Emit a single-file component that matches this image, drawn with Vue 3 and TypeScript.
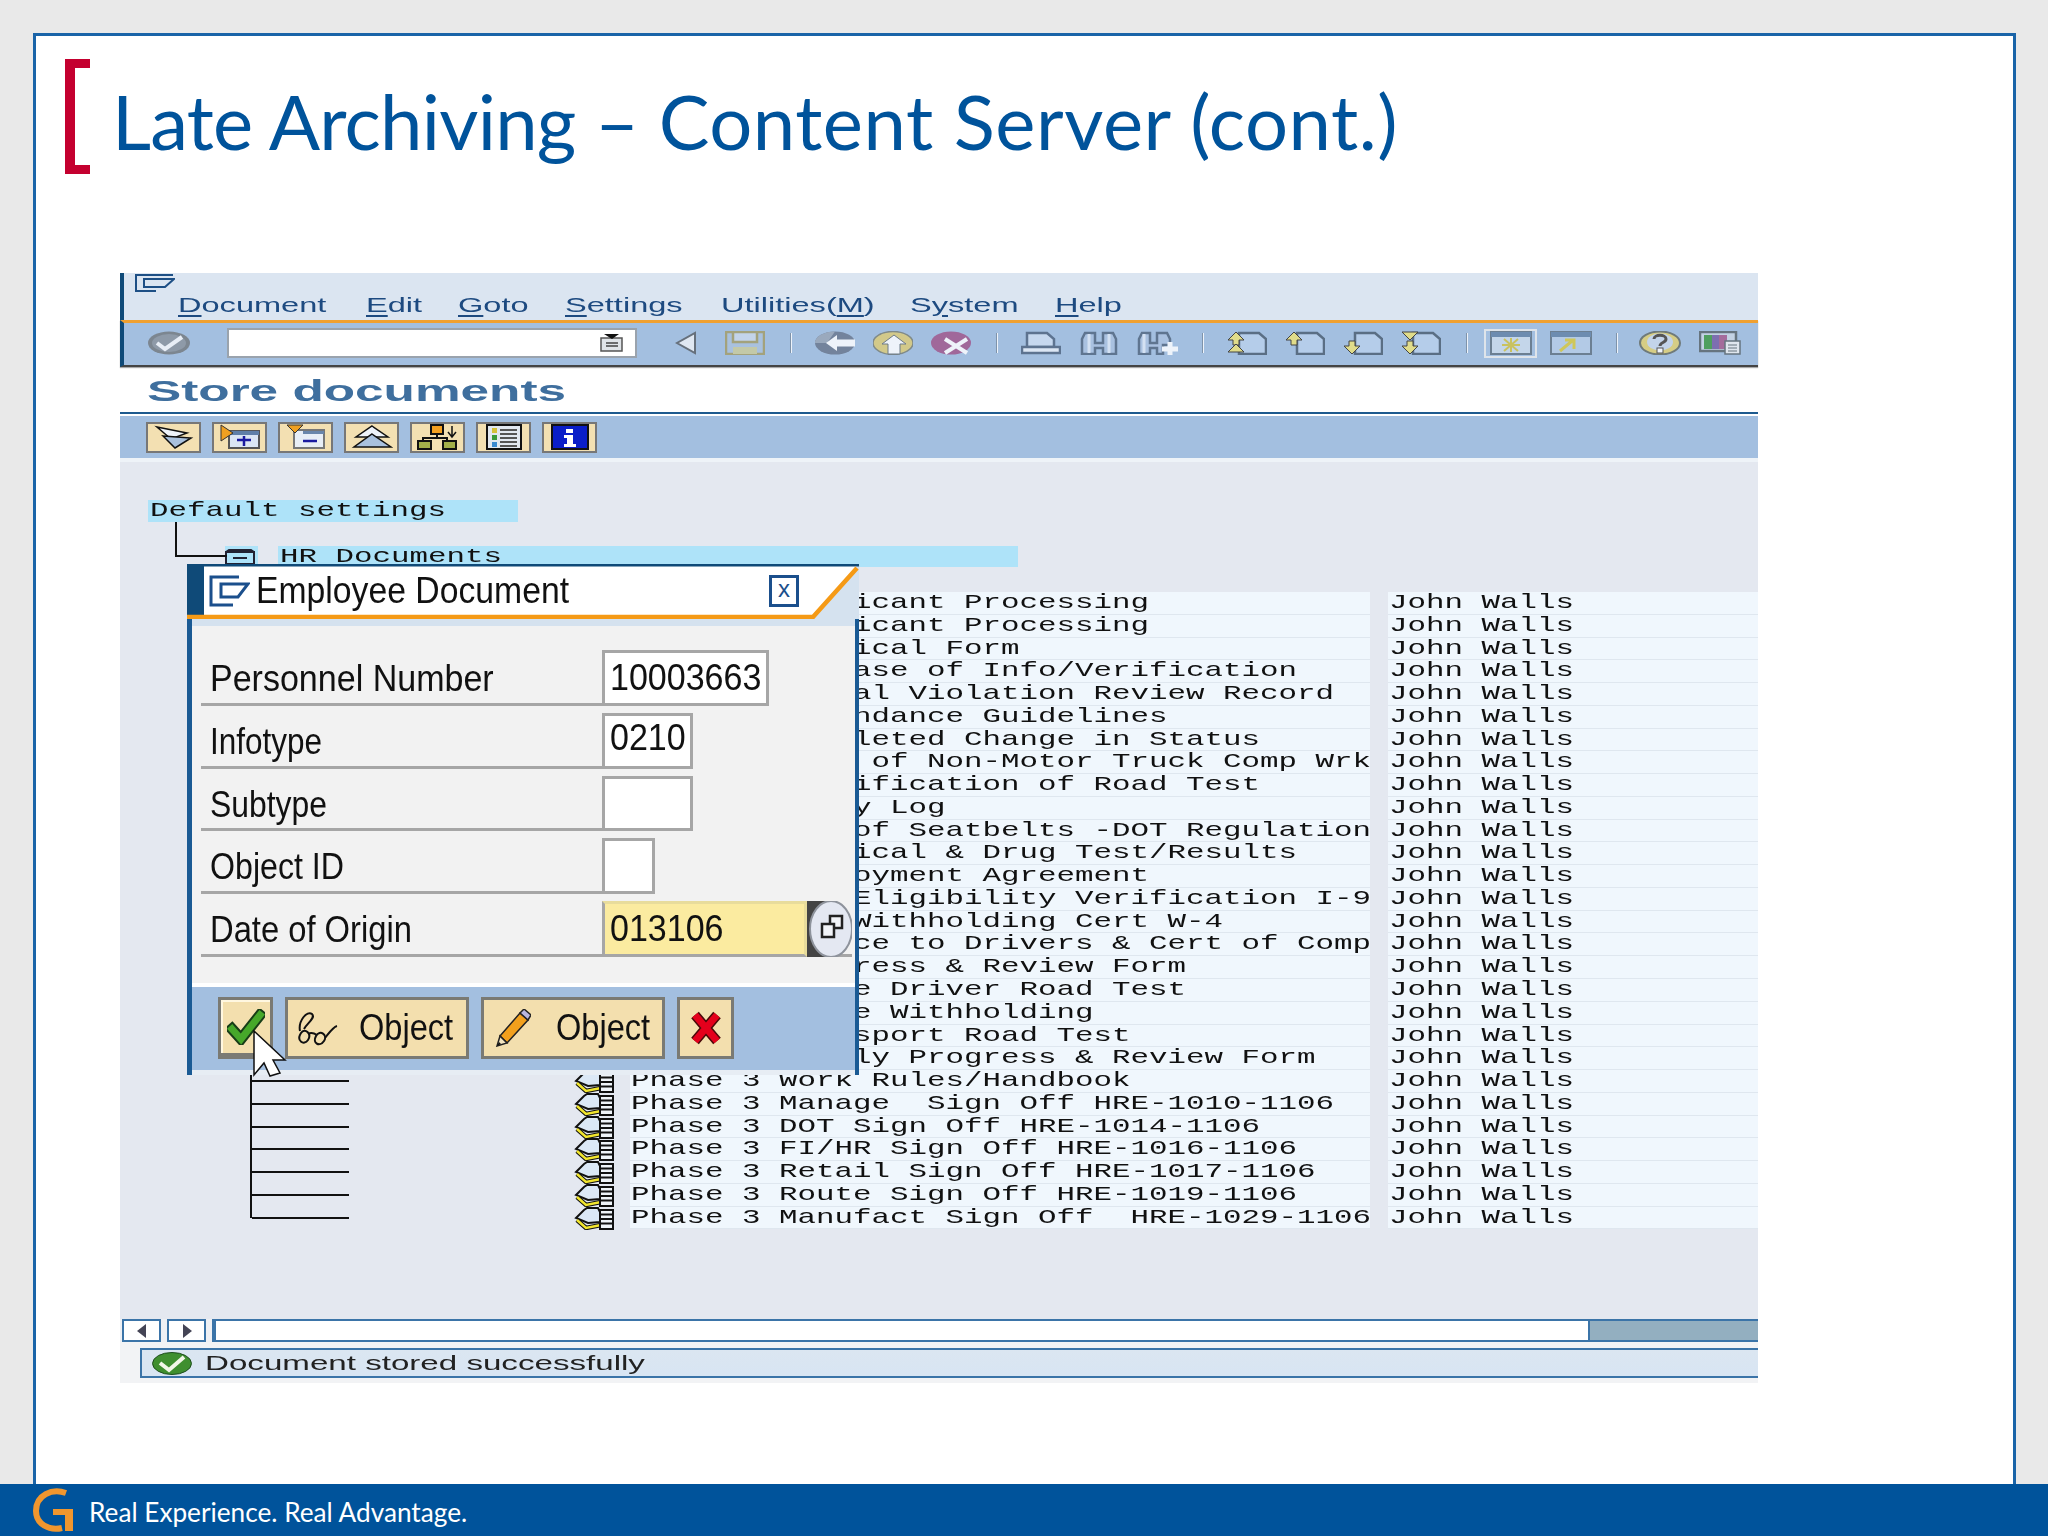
<script setup lang="ts">
interface MenuItem { pre: string; hot: string; post: string; w: number }
interface Field { label: string; value: string; w: number; sx: number; raised?: boolean; date?: boolean }

const menu: MenuItem[] = [
  { pre: '', hot: 'D', post: 'ocument', w: 188 },
  { pre: '', hot: 'E', post: 'dit', w: 92 },
  { pre: '', hot: 'G', post: 'oto', w: 107 },
  { pre: '', hot: 'S', post: 'ettings', w: 156 },
  { pre: 'Utilities(', hot: 'M', post: ')', w: 189 },
  { pre: 'S', hot: 'y', post: 'stem', w: 145 },
  { pre: '', hot: 'H', post: 'elp', w: 80 },
]

const rows: string[] = [
  'Phase 1 Applicant Processing',
  'Phase 1 Applicant Processing',
  'Phase 1 Physical Form',
  'Phase 1 Release of Info/Verification',
  'Phase 1 Annual Violation Review Record',
  'Phase 1 Attendance Guidelines',
  'Phase 2 Completed Change in Status',
  'Phase 2 Cert of Non-Motor Truck Comp Wrk',
  'Phase 2 Certification of Road Test',
  'Phase 2 Daily Log',
  'Phase 2 Use of Seatbelts -DOT Regulation',
  'Phase 2 Physical & Drug Test/Results',
  'Phase 2 Employment Agreement',
  'Phase 2 Emp Eligibility Verification I-9',
  'Phase 2 Fed Withholding Cert W-4',
  'Phase 2 Notice to Drivers & Cert of Comp',
  'Phase 2 Progress & Review Form',
  'Phase 3 Route Driver Road Test',
  'Phase 3 State Withholding',
  'Phase 3 Transport Road Test',
  'Phase 3 Weekly Progress & Review Form',
  'Phase 3 Work Rules/Handbook',
  'Phase 3 Manage  Sign Off HRE-1010-1106',
  'Phase 3 DOT Sign Off HRE-1014-1106',
  'Phase 3 FI/HR Sign Off HRE-1016-1106',
  'Phase 3 Retail Sign Off HRE-1017-1106',
  'Phase 3 Route Sign Off HRE-1019-1106',
  'Phase 3 Manufact Sign Off  HRE-1029-1106',
]

const fields: Field[] = [
  { label: 'Personnel Number', value: '10003663', w: 167, sx: 0.945 },
  { label: 'Infotype', value: '0210', w: 91, sx: 0.874, raised: true },
  { label: 'Subtype', value: '', w: 91, sx: 0.885 },
  { label: 'Object ID', value: '', w: 53, sx: 0.893 },
  { label: 'Date of Origin', value: '013106', w: 205, sx: 0.909, date: true },
]
</script>

<template>
  <div class="slide">
    <div class="frame">
      <div class="head">
        <div class="bracket"></div>
        <h1 class="title"><span class="t-a">Late Archiving</span> – <span class="t-b">Content Server (cont.)</span></h1>
      </div>

      <div class="sap">
        <div class="menubar">
          <svg class="sysicon" width="40" height="18" viewBox="0 0 40 18" fill="none" stroke="#1d4f85" stroke-width="2">
            <path d="M38 1H1V17H21" /><path d="M9 13V5H39L30 13Z" />
          </svg>
          <div class="menu">
            <div v-for="m in menu" :key="m.hot + m.post" class="menu-item" :style="{ width: m.w + 'px' }">
              <span class="menu-text">{{ m.pre }}<span class="hot">{{ m.hot }}</span>{{ m.post }}</span>
            </div>
          </div>
        </div>

        <div class="stdbar">
          <svg class="ic-check" width="43" height="24" viewBox="0 0 43 24">
            <ellipse cx="21" cy="12" rx="21" ry="11.5" fill="#7c8690" /><ellipse cx="21" cy="12" rx="17" ry="9" fill="#8e9aa8" />
            <path d="M9 12L17 18L34 6" fill="none" stroke="#e8eef6" stroke-width="4" />
          </svg>
          <div class="cmd">
            <svg width="26" height="18" viewBox="0 0 26 18">
              <rect x="2" y="4" width="21" height="13" fill="#e0e4e8" stroke="#555" stroke-width="1.5" />
              <path d="M5 0H20L13 5Z" fill="#111" /><path d="M7 9H19M7 12H19" stroke="#444" stroke-width="1.5" />
            </svg>
          </div>
          <svg class="ic-tri" width="22" height="24" viewBox="0 0 22 24">
            <path d="M20 2V22L2 12Z" fill="#dfe7f2" stroke="#66707c" stroke-width="2" />
          </svg>
          <svg class="ic-save" width="40" height="24" viewBox="0 0 40 24">
            <rect x="1" y="1" width="38" height="22" fill="#a9c1de" stroke="#a3a27c" stroke-width="2.5" />
            <rect x="8" y="1" width="24" height="10" fill="#c3d4ea" stroke="#a3a27c" stroke-width="2.5" />
            <rect x="8" y="16" width="24" height="7" fill="#c3c9a8" />
          </svg>
          <i class="sep"></i>
          <div class="tb-group">
            <svg width="40" height="24" viewBox="0 0 40 24">
              <ellipse cx="20" cy="12" rx="20" ry="11.5" fill="#73839c" />
              <path d="M0 12A20 11.5 0 0 1 20 .5L12 12Z" fill="#9aa9bd" />
              <path d="M11 12L22 4V8.5H40V15.5H22V20Z" fill="#eef3fa" />
            </svg>
            <svg width="40" height="24" viewBox="0 0 40 24">
              <ellipse cx="20" cy="12" rx="20" ry="11.5" fill="#d2c98a" stroke="#7f8a8a" stroke-width="1.5" />
              <path d="M21 4L33 13H27V23H15V13H9Z" fill="#eef3fa" stroke="#6d7a88" />
            </svg>
            <svg width="40" height="24" viewBox="0 0 40 24">
              <ellipse cx="20" cy="12" rx="20" ry="11.5" fill="#a0689a" />
              <path d="M14 8L36 22M36 8L14 22" stroke="#eef3fa" stroke-width="4" />
            </svg>
          </div>
          <i class="sep"></i>
          <div class="tb-group">
            <svg width="40" height="24" viewBox="0 0 40 24" fill="#c6d8ef" stroke="#5d7390" stroke-width="2.5">
              <path d="M6 16V2H26L33 8V16Z" /><rect x="1" y="16" width="38" height="6" fill="#dbe6f4" />
            </svg>
            <svg width="40" height="24" viewBox="0 0 40 24" fill="#a9c1e0" stroke="#5f7590" stroke-width="2.5">
              <path d="M3 8L6 2H16V12H24V2H34L37 8V23H24V17H16V23H3Z" /><path d="M10 3V22M30 3V22" stroke="#d4e1f2" stroke-width="3" />
            </svg>
            <svg class="find-next" width="42" height="24" viewBox="0 0 42 24" fill="#a9c1e0" stroke="#5f7590" stroke-width="2.5">
              <path d="M2 8L5 2H13V12H20V2H30L33 8V14H26V23H20V17H13V23H2Z" />
              <path d="M7 3V22" stroke="#d4e1f2" stroke-width="3" />
              <path d="M25 18H41M33 11V24" stroke="#eef3fa" stroke-width="5" />
            </svg>
          </div>
          <i class="sep"></i>
          <div class="tb-group">
            <svg v-for="n in 4" :key="n" width="40" height="24" viewBox="0 0 40 24">
              <path d="M12 2H32L39 8V23H12Z" fill="#b5cdea" stroke="#5a6e84" stroke-width="2.5" />
              <path v-if="n === 1 || n === 2" d="M9 1L17 9H12V14H6V9H1Z" fill="#e0dc8a" stroke="#444" />
              <path v-if="n === 3 || n === 4" d="M9 23L17 15H12V10H6V15H1Z" fill="#e0dc8a" stroke="#444" />
              <path v-if="n === 1" d="M9 13L17 21H1Z" fill="#e0dc8a" stroke="#444" />
              <path v-if="n === 4" d="M9 9L17 1H1Z" fill="#e0dc8a" stroke="#444" />
            </svg>
          </div>
          <i class="sep"></i>
          <div class="tb-group">
            <div class="pressed">
              <svg width="42" height="24" viewBox="0 0 42 24">
                <rect x="1" y="1" width="40" height="22" fill="#c4d6ea" stroke="#6c7f92" stroke-width="2" />
                <rect x="1" y="1" width="40" height="5" fill="#6d8cb0" />
                <path d="M21 7V21M12 14H30M14 8L28 20M28 8L14 20" stroke="#c9c25f" stroke-width="2" />
              </svg>
            </div>
            <svg class="shortcut" width="42" height="24" viewBox="0 0 42 24">
              <rect x="1" y="1" width="40" height="22" fill="#b3cae6" stroke="#6c7f92" stroke-width="2" />
              <rect x="1" y="1" width="40" height="5" fill="#6d8cb0" />
              <path d="M10 20L22 10M15 9H24V18" fill="none" stroke="#cfc75a" stroke-width="3" />
            </svg>
          </div>
          <i class="sep"></i>
          <div class="tb-group tb-last">
            <svg width="42" height="24" viewBox="0 0 42 24">
              <ellipse cx="21" cy="12" rx="20" ry="11.5" fill="#d6cd85" stroke="#6f7a7a" stroke-width="2" />
              <ellipse cx="21" cy="11" rx="13" ry="8.5" fill="#c3d4ea" />
              <path d="M15 8C15 3 27 3 27 8C27 12 21 11 21 15" fill="none" stroke="#555" stroke-width="3" /><rect x="18" y="17" width="6" height="5" fill="#eef3fa" stroke="#555" />
            </svg>
            <svg width="42" height="24" viewBox="0 0 42 24">
              <rect x="1" y="1" width="36" height="19" fill="#c3d2e4" stroke="#66747f" stroke-width="2.5" />
              <rect x="5" y="4" width="8" height="14" fill="#4f9f5f" /><rect x="13" y="4" width="7" height="14" fill="#7d6fb0" /><rect x="20" y="4" width="8" height="14" fill="#a46c9c" />
              <rect x="26" y="10" width="15" height="13" fill="#dfe6ee" stroke="#66747f" stroke-width="1.5" />
              <path d="M29 14H38M29 17H38M29 20H38" stroke="#66747f" />
            </svg>
          </div>
        </div>

        <div class="screen-title"><span class="screen-title-text">Store documents</span></div>

        <div class="appbar">
          <div class="tbtn">
            <svg width="42" height="24" viewBox="0 0 42 24" stroke="#111" stroke-width="1.5">
              <path d="M4 2L34 8L18 14Z" fill="#eef3fa" /><path d="M10 11L38 13L22 23Z" fill="#a9c1de" />
            </svg>
          </div>
          <div class="tbtn">
            <svg width="42" height="26" viewBox="0 0 42 26">
              <rect x="10" y="7" width="30" height="17" fill="#dbe6f4" stroke="#555" stroke-width="2" />
              <rect x="10" y="7" width="30" height="4" fill="#5f7fa8" />
              <path d="M2 1L14 9L2 17Z" fill="#f0a020" stroke="#333" />
              <path d="M18 16H32M25 12V22" stroke="#1a1aa0" stroke-width="2.5" />
            </svg>
          </div>
          <div class="tbtn">
            <svg width="42" height="26" viewBox="0 0 42 26">
              <rect x="9" y="6" width="30" height="18" fill="#e8eef6" stroke="#777" stroke-width="2" />
              <rect x="18" y="7" width="21" height="3" fill="#6a86ab" />
              <path d="M2 1H18L10 9Z" fill="#f0a020" stroke="#333" />
              <path d="M18 17H32" stroke="#1a1aa0" stroke-width="2.5" />
            </svg>
          </div>
          <div class="tbtn">
            <svg width="42" height="24" viewBox="0 0 42 24" stroke="#111" stroke-width="1.5">
              <path d="M21 1L37 12H5Z" fill="#eef3fa" /><path d="M21 9L40 22H3Z" fill="#a9c1de" />
            </svg>
          </div>
          <div class="tbtn">
            <svg width="42" height="26" viewBox="0 0 42 26">
              <rect x="14" y="1" width="12" height="9" fill="#f4a020" stroke="#111" stroke-width="2" />
              <path d="M20 10V14M6 18V14H30V18" fill="none" stroke="#111" stroke-width="2" />
              <rect x="1" y="17" width="13" height="8" fill="#a3b04a" stroke="#111" stroke-width="2" />
              <rect x="26" y="17" width="13" height="8" fill="#a3b04a" stroke="#111" stroke-width="2" />
              <path d="M35 2V12M31 8L35 13L39 8" fill="none" stroke="#111" stroke-width="1.5" />
            </svg>
          </div>
          <div class="tbtn">
            <svg width="36" height="26" viewBox="0 0 36 26">
              <rect x="1" y="1" width="34" height="24" fill="#e2e8f0" stroke="#111" stroke-width="2" />
              <rect x="6" y="4" width="5" height="5" fill="#d4c13a" /><rect x="6" y="11" width="5" height="5" fill="#3a9a3a" /><rect x="6" y="18" width="5" height="5" fill="#3a8ad0" />
              <path d="M14 6H31M14 10H31M14 14H31M14 18H31M14 22H31" stroke="#555" stroke-width="2" />
            </svg>
          </div>
          <div class="tbtn">
            <svg width="38" height="26" viewBox="0 0 38 26">
              <rect x="1" y="1" width="36" height="24" fill="#0a1ec8" stroke="#111" stroke-width="2" />
              <path d="M15 5H22V9H15ZM13 11H22V20H25V23H13V20H16V14H13Z" fill="#fff" />
            </svg>
          </div>
        </div>

        <div class="content">
          <div class="default-row"><span class="mono">Default settings</span></div>
          <div class="hr-row">
            <div class="elbow"></div>
            <div class="folder">
              <svg width="30" height="16" viewBox="0 0 30 16" fill="none" stroke="#223" stroke-width="2">
                <rect x="1" y="3" width="28" height="12" /><path d="M1 3L4 1H26L29 3M8 9H22" />
              </svg>
            </div>
            <div class="hr-text"><span class="mono">HR Documents</span></div>
          </div>

          <div class="rows">
            <div v-for="(r, i) in rows" :key="i" class="row">
              <div class="tree-cell">
                <div v-if="i >= 21" class="tree" :class="{ last: i === rows.length - 1 }"><div class="tree-h"></div></div>
              </div>
              <svg class="row-ic" width="40" height="23" viewBox="0 0 40 23">
                <path d="M2 11L10 3L13 1H24L27 7L26 15L14 16Z" fill="#dbe8f6" stroke="#111" stroke-width="2" />
                <path d="M3 13L12 21L27 18" fill="none" stroke="#111" stroke-width="4.5" />
                <path d="M3 13L12 21L27 18" fill="none" stroke="#f2e62e" stroke-width="2.5" />
                <rect x="26" y="3" width="13" height="19" fill="#eef3f8" stroke="#111" stroke-width="2" />
                <path d="M26 7.5H39M26 12H39M26 16.5H39" stroke="#111" stroke-width="2" />
              </svg>
              <div class="cell"><span class="mono">{{ r }}</span></div>
              <div class="cell-gap"></div>
              <div class="cell"><span class="mono">John Walls</span></div>
            </div>
          </div>
        </div>

        <div class="scroll">
          <div class="sbtn"><svg width="10" height="14" viewBox="0 0 10 14"><path d="M9 0V14L0 7Z" fill="#445" /></svg></div>
          <div class="sbtn"><svg width="10" height="14" viewBox="0 0 10 14"><path d="M1 0V14L10 7Z" fill="#445" /></svg></div>
          <div class="track"><div class="thumb"></div></div>
        </div>

        <div class="status-wrap">
          <div class="status">
            <svg width="40" height="23" viewBox="0 0 40 23">
              <ellipse cx="20" cy="11.5" rx="19.5" ry="11" fill="#3f8f2f" stroke="#1f4f1f" />
              <path d="M8 11L17 18L32 5" fill="none" stroke="#f2f6e8" stroke-width="4" />
            </svg>
            <span class="status-text">Document stored successfully</span>
          </div>
        </div>

        <div class="dialog">
          <div class="dlg-head">
            <svg class="dlg-shape" width="672" height="55" viewBox="0 0 672 55">
              <rect width="672" height="55" fill="#d5e2ef" />
              <path d="M17 2H670L626 51H17Z" fill="#fff" />
              <rect width="17" height="51" fill="#0f4a78" />
              <rect width="672" height="2.5" fill="#0f4a78" />
              <path d="M0 53H626L670 4" fill="none" stroke="#f59a16" stroke-width="4.5" />
            </svg>
            <svg class="dlg-icon" width="41" height="32" viewBox="0 0 41 32" fill="none" stroke="#1b4f8c" stroke-width="3">
              <path d="M30 2H2V30H24" /><path d="M12 22V9H39L29 22Z" />
            </svg>
            <span class="dlg-title">Employee Document</span>
            <div class="dlg-close">x</div>
          </div>
          <div class="dlg-strip"></div>
          <div class="dlg-body">
            <div v-for="f in fields" :key="f.label" class="field" :style="{ width: 401 + f.w + (f.date ? 45 : 0) + 'px' }">
              <div class="f-label"><span class="f-label-text" :style="{ transform: 'scaleX(' + f.sx + ')' }">{{ f.label }}</span></div>
              <div class="f-input" :class="{ yellow: f.date }" :style="{ width: f.w + 'px' }">
                <span class="f-value" :class="{ raised: f.raised }">{{ f.value }}</span>
              </div>
              <svg v-if="f.date" class="lookup" width="45" height="56" viewBox="0 0 45 56">
                <rect width="30" height="56" fill="#444" />
                <ellipse cx="24" cy="28" rx="21" ry="28" fill="#e4e8f2" stroke="#8e939c" stroke-width="2" />
                <rect x="23" y="15" width="12" height="12" fill="#f2f4f8" stroke="#222" stroke-width="2.5" />
                <rect x="15" y="23" width="12" height="13" fill="#f2f4f8" stroke="#222" stroke-width="2.5" />
              </svg>
            </div>
          </div>
          <div class="dlg-bar">
            <div class="btn btn-ok">
              <svg width="38" height="36" viewBox="0 0 38 36" fill="none" stroke-linecap="square">
                <path d="M5 20L14 30L33 6" stroke="#173d17" stroke-width="11" /><path d="M5 20L14 30L33 6" stroke="#46a82a" stroke-width="7" />
              </svg>
            </div>
            <div class="btn btn-show">
              <svg width="44" height="38" viewBox="0 0 44 38" fill="none" stroke="#111" stroke-width="2">
                <path d="M6 24C1 32 9 37 13 31C17 25 10 18 6 24ZM21 27C17 35 25 38 29 32C33 26 25 20 21 27ZM13 25C16 23 19 24 22 26" />
                <path d="M5 22C3 12 12 1 17 5C21 9 12 14 9 20M30 29C34 24 38 18 42 17" />
              </svg>
              <span class="btn-text">Object</span>
            </div>
            <div class="btn btn-edit">
              <svg width="36" height="38" viewBox="0 0 36 38">
                <path d="M5 27L25 4L33 11L12 34Z" fill="#f2a01c" stroke="#222" stroke-width="1.5" />
                <path d="M25 4L29 0L36 6L33 11Z" fill="#b9b6de" stroke="#222" stroke-width="1.5" />
                <path d="M5 27L12 34L2 37Z" fill="#f5e6c0" stroke="#222" stroke-width="1.5" />
                <path d="M4 33L6 35L2 37Z" fill="#111" />
              </svg>
              <span class="btn-text">Object</span>
            </div>
            <div class="btn btn-x">
              <svg width="32" height="34" viewBox="0 0 32 34" fill="none">
                <path d="M5 4L27 30M27 4L5 30" stroke="#4a0a0a" stroke-width="10" /><path d="M5 4L27 30M27 4L5 30" stroke="#e4001c" stroke-width="7" />
              </svg>
            </div>
          </div>
          <div class="dlg-end"></div>
        </div>

        <svg class="cursor" width="34" height="48" viewBox="0 0 34 48">
          <path d="M1 1L32 30H20L27 43L17 46L11 33L1 45Z" fill="#fff" stroke="#111" stroke-width="1.5" />
        </svg>
      </div>
    </div>

    <footer class="foot">
      <svg class="logo" width="42" height="44" viewBox="0 0 42 44">
        <path d="M34 5C20 0 4 7 4 23C4 36 17 43 30 40" fill="none" stroke="#f0962e" stroke-width="6" />
        <path d="M21 21H41V43H33V27H21Z" fill="#f0962e" />
      </svg>
      <span class="tagline">Real Experience. Real Advantage.</span>
    </footer>
  </div>
</template>

<style>
body { margin: 0; }
</style>

<style scoped>
.slide { width: 2048px; height: 1536px; background: #e9e9e9; display: flex; flex-direction: column; overflow: hidden; }
.frame { margin: 33px 32px 0 33px; height: 1451px; box-sizing: border-box; border: 3px solid #1a64a8; border-bottom: 0; background: #fff; }
.head { height: 237px; box-sizing: border-box; padding: 23px 0 0 29px; display: flex; }
.bracket { width: 25px; height: 115px; box-sizing: border-box; border: solid #c4002f; border-width: 9px 0 9px 10px; }
.title { margin: 17px 0 0 22px; font: 400 76px/90px Lato, sans-serif; color: #00539b; white-space: nowrap; }
.t-a { letter-spacing: -0.75px; }
.t-b { letter-spacing: 0.55px; }

.sap { position: relative; margin-left: 84px; width: 1638px; height: 1110px; display: flex; flex-direction: column; font-family: "Liberation Sans", sans-serif; filter: blur(0.45px); }

.menubar { height: 47px; box-sizing: border-box; background: #dbe5f1; border-left: 4px solid #0f4a78; padding-left: 11px; }
.sysicon { display: block; padding-top: 1px; }
.menu { display: flex; margin: 1px 0 0 43px; }
.menu-item { flex: none; }
.menu-text { display: inline-block; font-size: 21px; line-height: 24px; color: #1d4a80; transform: scaleX(1.55); transform-origin: 0 50%; white-space: pre; }
.hot { text-decoration: underline; text-decoration-thickness: 2px; text-underline-offset: 3px; }

.stdbar { height: 47px; box-sizing: border-box; background: #a3bfe0; border-top: 3px solid #f0a030; border-left: 4px solid #0f4a78; border-bottom: 2px solid #444; box-shadow: 0 1px 1px #aaa; display: flex; align-items: center; padding: 0 0 2px 24px; }
.stdbar svg { flex: none; display: block; }
.cmd { margin-left: 36px; width: 410px; height: 30px; box-sizing: border-box; background: #fff; border: 2px solid #9aa3ad; display: flex; align-items: center; justify-content: flex-end; padding-right: 10px; }
.ic-tri { margin-left: 38px; }
.ic-save { margin-left: 28px; }
.sep { flex: none; width: 2px; height: 20px; margin: 0 23px 0 25px; background: #eef3fa; border-left: 1px solid #7f93aa; box-sizing: border-box; }
.tb-group { display: flex; align-items: center; gap: 18px; }
.find-next { margin-right: -2px; }
.shortcut { margin-right: -1px; }
.tb-last { margin-left: -2px; }
.pressed { width: 53px; height: 29px; margin: 0 -5px 0 -7px; box-sizing: border-box; border: 2px solid #dfe4ea; display: flex; align-items: center; justify-content: center; }

.screen-title { height: 46px; box-sizing: border-box; margin-top: 1px; border-bottom: 2px solid #1d5a8e; padding-left: 27px; line-height: 45px; }
.screen-title-text { display: inline-block; font-size: 30px; font-weight: 700; color: #3f6f9e; transform: scaleX(1.71); transform-origin: 0 50%; }

.appbar { margin-top: 2px; height: 42px; background: #a3bfe0; display: flex; align-items: center; gap: 11px; padding-left: 26px; }
.tbtn { width: 55px; height: 31px; box-sizing: border-box; background: #f3e0b2; border: 2px solid #777; display: flex; align-items: center; justify-content: center; overflow: hidden; }

.content { position: relative; flex: none; height: 861px; box-sizing: border-box; padding-top: 38px; background: #e4e8f0; border-top: 4px solid #eef3f8; }
.mono { display: inline-block; font-family: "Liberation Mono", monospace; font-size: 21px; line-height: 22px; color: #111; white-space: pre; transform: scaleX(1.468); transform-origin: 0 50%; }
.default-row { margin-left: 28px; width: 370px; height: 22px; box-sizing: border-box; padding-left: 2px; background: #aee3f9; }
.hr-row { position: relative; margin-top: 24px; height: 21px; display: flex; padding-left: 105px; }
.elbow { position: absolute; left: 55px; top: -24px; width: 50px; height: 33px; border: solid #111; border-width: 0 0 2px 2px; }
.folder { width: 33px; height: 21px; background: #aee3f9; padding-top: 3px; box-sizing: border-box; }
.folder svg { display: block; }
.hr-text { margin-left: 20px; width: 740px; box-sizing: border-box; padding-left: 2px; background: #aee3f9; }
.rows { margin-top: 25px; }
.row { display: grid; grid-template-columns: 99px 225px 56px 740px 18px 370px; height: 22.78px; margin-left: 130px; width: 1508px; }
.row > .tree-cell { grid-column: 1; }
.row-ic { grid-column: 3; align-self: center; }
.cell { height: 22.78px; box-sizing: border-box; padding-left: 1px; background: #f0f7fd; border-bottom: 1.5px solid #dfe7ef; overflow: hidden; }
.cell .mono { line-height: 21px; }
.tree-cell { height: 22.78px; }
.tree { height: 100%; box-sizing: border-box; border-left: 2px solid #111; }
.tree.last { height: 11px; }
.tree-h { height: 10px; border-bottom: 2px solid #111; }

.scroll { height: 23px; background: #eef0f4; display: flex; padding-left: 2px; gap: 6px; }
.sbtn { width: 39px; box-sizing: border-box; background: #fff; border: 2px solid #3b74a8; display: flex; align-items: center; justify-content: center; }
.track { flex: 1; box-sizing: border-box; background: #fff; border: solid #3b74a8; border-width: 2px 0 2px 4px; display: flex; justify-content: flex-end; }
.thumb { width: 168px; background: #93afc0; border-left: 2px solid #3b74a8; }
.status-wrap { background: #f2f3f5; padding: 6px 0 5px 20px; }
.status { height: 30px; box-sizing: border-box; background: linear-gradient(#dbe6f1, #d8e5f3); border: solid #3b74a8; border-width: 2px 0 2px 2px; display: flex; align-items: center; padding-left: 10px; gap: 13px; }
.status svg { flex: none; }
.status-text { display: inline-block; font-size: 21px; color: #222; transform: scaleX(1.577); transform-origin: 0 50%; white-space: pre; }

.dialog { position: absolute; left: 67px; top: 291px; width: 672px; height: 511px; box-sizing: border-box; border: solid #1a5a94; border-width: 0 4px 0 5px; background: #f2f2f2; display: flex; flex-direction: column; }
.dlg-head { position: relative; height: 55px; flex: none; display: flex; align-items: center; padding: 0 56px 1px 17px; box-sizing: border-box; }
.dlg-shape { position: absolute; left: -5px; top: 0; }
.dlg-icon { position: relative; flex: none; }
.dlg-title { position: relative; display: inline-block; margin-left: 6px; font-size: 36px; color: #111; white-space: nowrap; transform: scaleX(0.937); transform-origin: 0 50%; }
.dlg-close { position: relative; margin-left: auto; width: 30px; height: 32px; box-sizing: border-box; border: 3px solid #1b4f8c; background: #fff; color: #1b4f8c; font-size: 24px; line-height: 22px; text-align: center; }
.dlg-strip { height: 7px; flex: none; background: #d5e2ef; }
.dlg-body { flex: 1; padding: 24px 0 0 9px; display: flex; flex-direction: column; gap: 7px; }
.field { height: 55.75px; display: flex; box-shadow: inset 0 -3px 0 #a6a6a6; font-size: 36px; color: #111; }
.f-label { flex: none; width: 401px; box-sizing: border-box; padding-left: 9px; line-height: 57px; }
.f-label-text { display: inline-block; transform-origin: 0 50%; white-space: nowrap; }
.f-input { flex: none; box-sizing: border-box; border: 3px solid #a6a6a6; background: #fff; padding-left: 5px; line-height: 50px; overflow: hidden; }
.f-input.yellow { background: #fbeba0; border-color: #e8dc9c #e8dc9c #a6a6a6 #a6a6a6; }
.f-value { display: inline-block; transform: scaleX(0.945); transform-origin: 0 50%; }
.raised { position: relative; top: -3px; }
.lookup { flex: none; }
.dlg-bar { flex: none; height: 87px; box-sizing: border-box; border-top: 4px solid #fff; background: #a3bfe0; padding: 10px 0 0 26px; display: flex; align-items: flex-start; gap: 12px; }
.btn { height: 62px; box-sizing: border-box; background: #f3dfae; border: 3px solid #7a7a74; display: flex; align-items: center; color: #111; }
.btn-ok { width: 55px; border-bottom-width: 6px; padding-left: 6px; box-shadow: inset 2px 2px 0 #fff7e0; }
.btn-show { width: 184px; padding-left: 7px; gap: 20px; }
.btn-edit { width: 184px; padding-left: 11px; gap: 25px; }
.btn-x { width: 57px; justify-content: center; }
.btn-text { display: inline-block; font-size: 36px; transform: scaleX(0.905); transform-origin: 0 50%; }
.dlg-end { height: 5px; flex: none; background: #e7edf4; }
.cursor { position: absolute; left: 133px; top: 757px; }

.foot { flex: 1; background: #00539b; display: flex; align-items: center; padding-left: 32px; }
.logo { flex: none; }
.tagline { margin: 3px 0 0 15px; font: 400 26.2px Lato, sans-serif; color: #fff; white-space: nowrap; }
</style>
